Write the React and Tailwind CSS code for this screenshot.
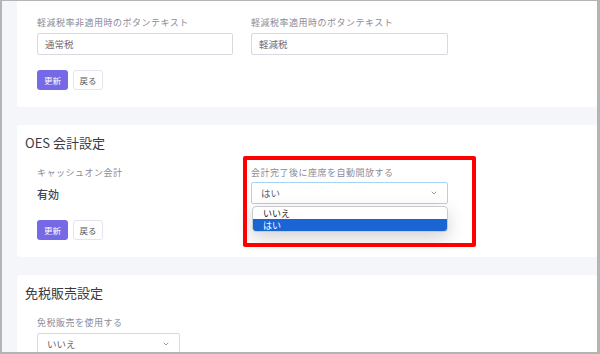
import { ChevronDown } from 'lucide-react';

const FONT = { fontFamily: '"Noto Sans CJK JP", "Noto Sans", sans-serif' };

function Label({ children }) {
  return <div className="text-[9px] leading-[12px] text-[#8b8b99] tracking-[0.5px]">{children}</div>;
}

function TextInput({ value }) {
  return (
    <div className="h-[22px] border border-[#d9d9e2] rounded-[2px] bg-white flex items-center px-[7px] text-[9.5px] text-[#6e6e7c]">
      {value}
    </div>
  );
}

function Select({ value, focused, className = '' }) {
  return (
    <div
      className={`h-[22px] border rounded-[2px] bg-white flex items-center justify-between px-[9px] text-[9.5px] text-[#5c5c6a] ${
        focused ? 'border-[#a9d3f2]' : 'border-[#d9d9e2]'
      } ${className}`}
    >
      <span>{value}</span>
      <ChevronDown size={8} strokeWidth={2.5} className="text-[#888]" />
    </div>
  );
}

function Buttons() {
  return (
    <div className="flex gap-[5px]">
      <div className="w-[31px] h-[20px] rounded-[3px] bg-[#7669e6] text-white text-[8.5px] flex items-center justify-center">更新</div>
      <div className="w-[30px] h-[20px] rounded-[3px] bg-white border border-[#e4e4ee] text-[#555] text-[8.5px] flex items-center justify-center">戻る</div>
    </div>
  );
}

export default function App() {
  return (
    <div style={FONT} className="w-[600px] h-[354px] overflow-hidden bg-[#f5f6fa] border-t border-l-2 border-r-[3px] border-b-2 border-[#b4b4b4] relative">
      <div className="pl-[15px]">
        {/* card 1 - top cut off */}
        <div className="bg-white -mt-[19px] pb-[17px] rounded-[3px]">
          <div className="pl-[20px] flex gap-[18px]">
            <div className="w-[196px] h-[19px] border-b-2 border-[#d0d0d8] rounded-[2px]" />
          </div>
          <div className="pl-[20px] pt-[16px] grid grid-cols-[196px_197px] gap-x-[18px]">
            <div>
              <Label>軽減税率非適用時のボタンテキスト</Label>
              <div className="mt-[4px]"><TextInput value="通常税" /></div>
            </div>
            <div>
              <Label>軽減税率適用時のボタンテキスト</Label>
              <div className="mt-[4px]"><TextInput value="軽減税" /></div>
            </div>
          </div>
          <div className="pl-[20px] mt-[15px]"><Buttons /></div>
        </div>

        {/* card 2 */}
        <div className="bg-white mt-[18px] h-[132px] rounded-[3px] pt-[9px]">
          <div className="pl-[8px] text-[13px] leading-[17px] text-[#3a3a44]">OES 会計設定</div>
          <div className="pl-[20px] mt-[16px] grid grid-cols-[196px_197px] gap-x-[18px]">
            <div>
              <Label>キャッシュオン会計</Label>
              <div className="mt-[8px] text-[11px] leading-[14px] text-[#44444e] font-medium">有効</div>
            </div>
            <div>
              <Label>会計完了後に座席を自動開放する</Label>
              <div className="mt-[3px]"><Select value="はい" focused /></div>
            </div>
          </div>
          <div className="pl-[20px] mt-[16px]"><Buttons /></div>
        </div>

        {/* card 3 */}
        <div className="bg-white mt-[18px] h-[100px] rounded-[3px] pt-[9px]">
          <div className="pl-[8px] text-[13px] leading-[17px] text-[#3a3a44]">免税販売設定</div>
          <div className="pl-[20px] mt-[16px]">
            <Label>免税販売を使用する</Label>
            <div className="mt-[4px] w-[143px]"><Select value="いいえ" /></div>
          </div>
        </div>
      </div>

      {/* open dropdown list */}
      <div className="absolute left-[250px] top-[205px] w-[196px] bg-white rounded-[4px] border border-[#c9c9cf] shadow-[0_6px_18px_rgba(0,0,0,0.18)] overflow-hidden text-[9px] leading-[9px]">
        <div className="px-[10px] h-[12px] text-[#222] flex items-center">いいえ</div>
        <div className="px-[10px] h-[12px] bg-[#1a64d4] text-white flex items-center">はい</div>
      </div>

      {/* annotation box */}
      <div className="absolute left-[241px] top-[155px] w-[233px] h-[91px] border-[4px] border-[#ff0000] rounded-[2px]" />
    </div>
  );
}
